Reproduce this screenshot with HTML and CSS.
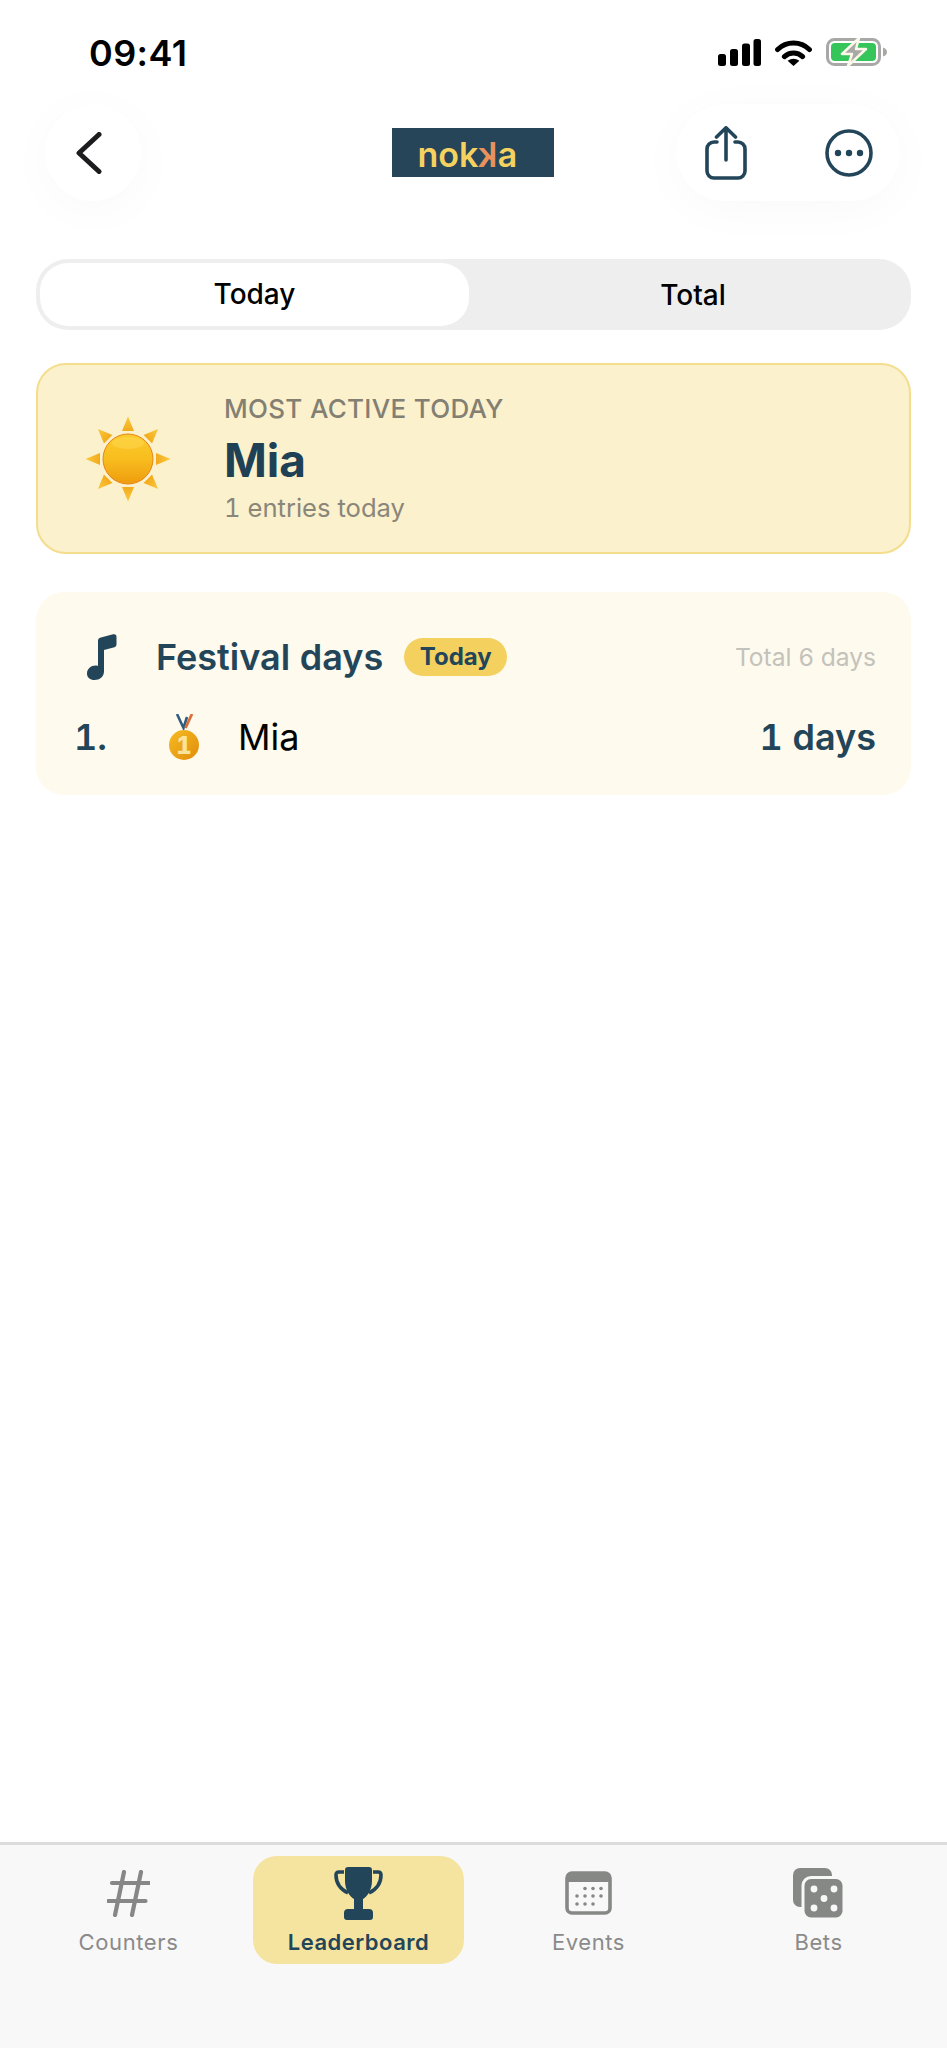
FILE: index.html
```html
<!DOCTYPE html>
<html lang="en">
<head>
    <meta charset="UTF-8">
    <meta name="viewport" content="width=device-width, initial-scale=1.0">
    <title>Leaderboard</title>
    <link rel="stylesheet" href="styles.css">
</head>
<body>
    <div class="app">
        <div class="status-bar">
            <span class="time">09:41</span>
            <div class="status-icons">
                <svg width="43" height="27" viewBox="0 0 43 27"><rect x="0" y="15" width="8" height="12" rx="2.5"/><rect x="12" y="10" width="8" height="17" rx="2.5"/><rect x="24" y="4.5" width="8" height="22.5" rx="2.5"/><rect x="35.5" y="0" width="7.5" height="27" rx="2.5"/></svg>
                <svg width="37" height="27" viewBox="0 0 37 27"><path d="M2.6 10.5A23 23 0 0 1 34.4 10.5M9.4 17.6A13 13 0 0 1 27.6 17.6" fill="none" stroke="#000" stroke-width="5" stroke-linecap="round"/><path d="M12.6 21.8Q18.5 17.6 24.4 21.8L18.5 27Z"/></svg>
                <svg width="61" height="28" viewBox="0 0 61 28"><rect x="1.5" y="1.5" width="52" height="25" rx="7" fill="none" stroke="#a8a9a6" stroke-width="3"/><path d="M57 9.5Q61 11 61 14T57 18.5Z" fill="#a8a9a6"/><rect x="5" y="5" width="45" height="18" rx="4" fill="#36c55a"/><path d="M33 0L16 16H26L22 28L40 11H30Z" fill="#a8a9a6" stroke="#fdf8ea" stroke-width="2.5" stroke-linejoin="round"/></svg>
            </div>
        </div>

        <header class="top-bar">
            <button class="round-btn back-btn">
                <svg width="26" height="42" viewBox="0 0 26 42"><path d="M23 2.5L3 21L23 39.5" fill="none" stroke="#1c1c1e" stroke-width="5" stroke-linecap="round" stroke-linejoin="round"/></svg>
            </button>
            <div class="logo"><span>nok</span><span class="logo-k">k</span><span>a</span></div>
            <div class="round-btn action-group">
                <svg width="42" height="54" viewBox="0 0 42 54"><path d="M12 16H9A7 7 0 0 0 2 23V45A7 7 0 0 0 9 52H33A7 7 0 0 0 40 45V23A7 7 0 0 0 33 16H30" fill="none" stroke="#234559" stroke-width="3.6" stroke-linecap="round"/><path d="M21 34V2M11.5 11L21 1.8L30.5 11" fill="none" stroke="#234559" stroke-width="3.6" stroke-linecap="round" stroke-linejoin="round"/></svg>
                <svg width="48" height="48" viewBox="0 0 48 48"><circle cx="24" cy="24" r="22" fill="none" stroke="#234559" stroke-width="3.6"/><circle cx="13" cy="24" r="3.2" fill="#234559"/><circle cx="24" cy="24" r="3.2" fill="#234559"/><circle cx="35" cy="24" r="3.2" fill="#234559"/></svg>
            </div>
        </header>

        <main class="content">
            <div class="segmented">
                <div class="seg-item seg-active">Today</div>
                <div class="seg-item seg-rest">Total</div>
            </div>

            <section class="hero-card">
                <div class="hero-icon">
                    <svg width="86" height="86" viewBox="0 0 86 86">
                        <defs>
                            <linearGradient id="sunBody" x1="0" y1="0" x2="0" y2="1"><stop offset="0" stop-color="#fdcb2c"/><stop offset=".5" stop-color="#f8bd1e"/><stop offset="1" stop-color="#ee9c0e"/></linearGradient>
                            <linearGradient id="sunRay" x1="0" y1="0" x2="0" y2="1"><stop offset="0" stop-color="#fcc93f"/><stop offset="1" stop-color="#f2ab1b"/></linearGradient>
                        </defs>
                        <g fill="url(#sunRay)">
                            <path d="M43 0.5L49 15H37Z"/>
                            <path d="M43 0.5L49 15H37Z" transform="rotate(45 43 43)"/>
                            <path d="M43 0.5L49 15H37Z" transform="rotate(90 43 43)"/>
                            <path d="M43 0.5L49 15H37Z" transform="rotate(135 43 43)"/>
                            <path d="M43 0.5L49 15H37Z" transform="rotate(180 43 43)"/>
                            <path d="M43 0.5L49 15H37Z" transform="rotate(225 43 43)"/>
                            <path d="M43 0.5L49 15H37Z" transform="rotate(270 43 43)"/>
                            <path d="M43 0.5L49 15H37Z" transform="rotate(315 43 43)"/>
                        </g>
                        <circle cx="43" cy="43" r="25" fill="url(#sunBody)" stroke="#e8851a" stroke-width="1"/>
                        <ellipse cx="43" cy="27" rx="16" ry="6" fill="#ffe067" opacity=".35"/>
                    </svg>
                </div>
                <div class="hero-text">
                    <div class="hero-label">MOST ACTIVE TODAY</div>
                    <div class="hero-name">Mia</div>
                    <div class="hero-sub">1 entries today</div>
                </div>
            </section>

            <section class="board-card">
                <div class="board-head">
                    <svg class="board-note" width="30" height="46" viewBox="0 0 30 46"><path d="M11 6.5Q11 4.4 13 3.8L26 0.3Q29.5 -.4 29.5 3V10.5Q29.5 12.6 27.5 13.2L17 16V37.5C17 42.5 12.5 46 7.5 46C3 46 0 43.5 0 39.5C0 35 4 31.5 8.5 31.5C9.2 31.5 10.2 31.6 11 31.9Z" fill="#234559"/></svg>
                    <h2 class="board-title">Festival days</h2>
                    <span class="badge">Today</span>
                    <span class="board-total">Total 6 days</span>
                </div>
                <div class="board-row">
                    <span class="rank">1.</span>
                    <svg class="medal" width="30" height="46" viewBox="0 0 30 46">
                        <defs><linearGradient id="medalBody" x1="0" y1="0" x2="1" y2="1"><stop offset="0" stop-color="#f6bb22"/><stop offset="1" stop-color="#e08d0c"/></linearGradient></defs>
                        <path d="M8 0L14.5 14L18 3" fill="none" stroke="#2f5d80" stroke-width="2.6"/>
                        <path d="M23 0L16.5 14" fill="none" stroke="#d9703a" stroke-width="2.8"/>
                        <circle cx="15" cy="31" r="15" fill="url(#medalBody)"/>
                        <text x="15" y="39.5" class="medal-num">1</text>
                    </svg>
                    <span class="row-name">Mia</span>
                    <span class="row-value">1 days</span>
                </div>
            </section>
        </main>

        <nav class="tab-bar">
            <div class="tab">
                <div class="tab-icon">
                    <svg width="43" height="47" viewBox="0 0 43 47"><path d="M17 2L8 45M34 2L25 45M5 13H42M1.5 31H38.5" fill="none" stroke="#878787" stroke-width="4.2" stroke-linecap="round"/></svg>
                </div>
                <span class="tab-label">Counters</span>
            </div>
            <div class="tab tab-active">
                <div class="tab-icon">
                    <svg width="49" height="53" viewBox="0 0 49 53"><path d="M10 5H5Q2 5 2 8C2 15 6 22 14 26M39 5H44Q47 5 47 8C47 15 43 22 35 26" fill="none" stroke="#234559" stroke-width="3.6"/><path d="M11 3Q11 0 14 0H35Q38 0 38 3V14C38 23 33 30 29 32V42H35Q39 42 39 46V50Q39 53 36 53H13Q10 53 10 50V46Q10 42 14 42H20V32C16 30 11 23 11 14Z" fill="#234559"/></svg>
                </div>
                <span class="tab-label">Leaderboard</span>
            </div>
            <div class="tab">
                <div class="tab-icon">
                    <svg width="47" height="44" viewBox="0 0 47 44">
                        <rect x="2" y="2" width="43" height="40" rx="5" fill="#f8f8f8" stroke="#868886" stroke-width="3.6"/>
                        <path d="M2 11V6Q2 1 7 1H40Q45 1 45 6V11Z" fill="#868886"/>
                        <g fill="#868886">
                            <circle cx="20" cy="17.5" r="1.8"/><circle cx="28" cy="17.5" r="1.8"/><circle cx="36" cy="17.5" r="1.8"/>
                            <circle cx="12" cy="25" r="1.8"/><circle cx="20" cy="25" r="1.8"/><circle cx="28" cy="25" r="1.8"/><circle cx="36" cy="25" r="1.8"/>
                            <circle cx="12" cy="33" r="1.8"/><circle cx="20" cy="33" r="1.8"/><circle cx="28" cy="33" r="1.8"/>
                        </g>
                    </svg>
                </div>
                <span class="tab-label">Events</span>
            </div>
            <div class="tab">
                <div class="tab-icon">
                    <svg width="51" height="51" viewBox="0 0 51 51">
                        <rect x="0" y="0" width="39" height="39" rx="7" fill="#868886"/>
                        <rect x="10" y="9.5" width="41" height="41.5" rx="8" fill="#868886" stroke="#f8f8f8" stroke-width="3"/>
                        <g fill="#f8f8f8">
                            <circle cx="21" cy="21" r="3.4"/><circle cx="41" cy="21" r="3.4"/><circle cx="31" cy="30.5" r="3.4"/><circle cx="21" cy="40" r="3.4"/><circle cx="41" cy="40" r="3.4"/>
                        </g>
                    </svg>
                </div>
                <span class="tab-label">Bets</span>
            </div>
        </nav>
    </div>
</body>
</html>
```

FILE: styles.css
```css
* {
    margin: 0;
    padding: 0;
    box-sizing: border-box;
}

body {
    font-family: Inter, "Liberation Sans", sans-serif;
    font-variant-numeric: tabular-nums;
    background: #fff;
    color: #000;
}

.app {
    display: flex;
    flex-direction: column;
    width: 947px;
    height: 2048px;
    overflow: hidden;
}

.status-bar {
    display: flex;
    justify-content: space-between;
    align-items: center;
    height: 104px;
    padding: 0 60px 0 89px;
}

.time {
    padding-top: 2px;
    font-size: 36px;
    font-variant-numeric: normal;
    font-weight: 600;
    letter-spacing: 0.4px;
    line-height: 40px;
}

.status-icons {
    display: flex;
    align-items: center;
    gap: 14px;
}

.status-icons svg {
    display: block;
}

.top-bar {
    display: grid;
    grid-template-columns: 1fr auto 1fr;
    align-items: center;
    padding: 0 47px 0 45px;
}

.round-btn {
    display: flex;
    align-items: center;
    height: 97px;
    background: #fff;
    border: none;
    border-radius: 49px;
    box-shadow: 0 8px 50px rgba(0, 0, 0, 0.028);
}

.back-btn {
    justify-content: center;
    width: 96px;
    padding-right: 9px;
}

.action-group {
    justify-self: end;
    justify-content: space-between;
    width: 224px;
    padding: 0 27px 0 29px;
}

.logo {
    display: flex;
    align-items: center;
    justify-content: flex-start;
    width: 162px;
    height: 49px;
    padding: 3px 0 0 26px;
    background: #264559;
    color: #f5d25f;
    font-size: 34px;
    font-weight: 600;
}

.logo-k {
    display: inline-block;
    color: #e8915c;
    transform: scaleX(-1);
}

.content {
    flex: 1;
    padding: 58px 36px 0;
}

.segmented {
    display: flex;
    align-items: center;
    height: 71px;
    padding: 4px 0 4px 4px;
    background: #eeeeee;
    border-radius: 32px;
}

.seg-item {
    font-size: 28px;
    font-weight: 500;
    text-align: center;
}

.seg-active {
    width: 429px;
    line-height: 63px;
    background: #fff;
    border-radius: 28px;
}

.seg-rest {
    flex: 1;
    padding-left: 6px;
}

.hero-card {
    display: flex;
    align-items: center;
    height: 191px;
    margin-top: 33px;
    padding-left: 47px;
    background: #fbf1cd;
    border: 2px solid #f4dd8c;
    border-radius: 30px;
}

.hero-icon {
    display: flex;
    width: 139px;
}

.hero-label {
    color: #837f72;
    font-size: 26px;
    font-weight: 500;
    letter-spacing: 0.3px;
    line-height: 30px;
}

.hero-name {
    margin-top: 8px;
    color: #1f4156;
    font-size: 46px;
    font-weight: 700;
    line-height: 56px;
}

.hero-sub {
    margin-top: 5px;
    color: #8a867a;
    font-size: 25.6px;
    line-height: 30px;
}

.board-card {
    height: 203px;
    margin-top: 38px;
    padding: 42px 36px 0 39px;
    background: #fefaed;
    border-radius: 28px;
}

.board-head {
    display: flex;
    align-items: center;
    height: 46px;
}

.board-note {
    margin-left: 12px;
}

.board-title {
    margin-left: 39px;
    color: #234559;
    font-size: 36px;
    font-weight: 600;
    line-height: 46px;
}

.badge {
    margin-left: 21px;
    padding: 0 15.5px;
    background: #f4d05f;
    border-radius: 19px;
    color: #234559;
    font-size: 24px;
    font-weight: 700;
    line-height: 38px;
}

.board-total {
    margin-left: auto;
    margin-right: -1px;
    color: #c3c2bb;
    font-size: 24.6px;
}

.board-row {
    display: flex;
    align-items: center;
    height: 46px;
    margin-top: 34px;
}

.rank {
    width: 95px;
    margin-left: -1px;
    color: #234559;
    font-size: 36px;
    font-weight: 600;
}

.medal-num {
    fill: #fbe39b;
    font-size: 24px;
    font-weight: 800;
    text-anchor: middle;
}

.row-name {
    margin-left: 39px;
    font-size: 36px;
}

.row-value {
    margin-left: auto;
    margin-right: -1px;
    color: #234559;
    font-size: 36px;
    font-weight: 600;
}

.tab-bar {
    display: grid;
    grid-template-columns: repeat(4, 211px);
    justify-content: center;
    gap: 19px;
    height: 206px;
    padding-top: 11px;
    background: #f8f8f8;
    border-top: 3px solid #dcdcdc;
}

.tab {
    display: flex;
    flex-direction: column;
    align-items: center;
    height: 108px;
    padding-top: 10px;
    border-radius: 24px;
}

.tab-icon {
    display: flex;
    align-items: center;
    justify-content: center;
    height: 54px;
}

.tab-label {
    margin-top: 8px;
    color: #8a8a8a;
    font-size: 22px;
    letter-spacing: 0.6px;
    line-height: 28px;
}

.tab-active {
    background: #f5e3a0;
}

.tab-active .tab-label {
    color: #234559;
    font-weight: 600;
    letter-spacing: 0.5px;
}
```
